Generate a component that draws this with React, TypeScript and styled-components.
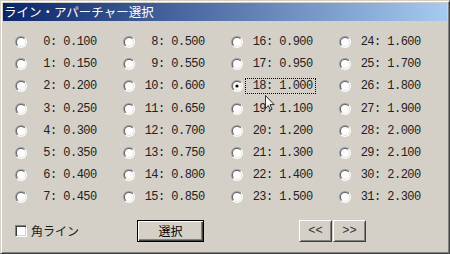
import * as React from 'react'
import styled, { createGlobalStyle } from 'styled-components'

const GlobalStyle = createGlobalStyle`
  html, body {
    margin: 0;
    padding: 0;
    background: #d4d0c8;
  }
  body {
    width: 450px;
    height: 254px;
    overflow: hidden;
  }
`

const Window = styled.div`
  position: relative;
  box-sizing: border-box;
  width: 450px;
  height: 254px;
  padding: 2px;
  background: #d4d0c8;
  border: 1px solid;
  border-color: #d4d0c8 #404040 #404040 #d4d0c8;
  box-shadow: inset 1px 1px #ffffff, inset -1px -1px #808080;
  display: flex;
  flex-direction: column;
  font-family: "Noto Sans CJK JP", sans-serif;
  color: #1c1c1c;
`

const TitleBar = styled.div`
  height: 18px;
  display: flex;
  align-items: center;
  padding-left: 1px;
  background: linear-gradient(to right, #0a246a, #a6caf0);
  color: #fff;
  font-size: 12.5px;
  line-height: 18px;
  white-space: nowrap;
`

const OptionGrid = styled.div`
  margin-top: 10px;
  padding-left: 12px;
  display: grid;
  grid-template-columns: repeat(4, 108px);
  grid-template-rows: repeat(8, 22.2px);
  grid-auto-flow: column;
`

const Option = styled.div`
  display: flex;
  align-items: center;
`

const OptionLabel = styled.span<{ $focused?: boolean }>`
  margin-left: 2px;
  padding: 1px 2px 0 0;
  border: 1px dotted ${p => (p.$focused ? '#000' : 'transparent')};
  font-family: "Liberation Mono", "DejaVu Sans Mono", monospace;
  font-size: 12px;
  letter-spacing: -0.53px;
  line-height: 13px;
  color: #222;
  white-space: pre;
`

const BottomRow = styled.div`
  margin-top: 11px;
  height: 22px;
  padding-left: 12px;
  display: flex;
  align-items: center;
`

const CheckGroup = styled.label`
  width: 122px;
  display: flex;
  align-items: center;
  gap: 4px;
  font-size: 12px;
`

const CheckBox = styled.span`
  box-sizing: border-box;
  width: 12px;
  height: 12px;
  background: #fff;
  border: 1px solid;
  border-color: #808080 #fff #fff #808080;
  box-shadow: inset 1px 1px #404040, inset -1px -1px #d4d0c8;
`

const Button = styled.button<{ $default?: boolean; $width: number }>`
  box-sizing: border-box;
  width: ${p => p.$width}px;
  height: 22px;
  padding: 0;
  margin: 0;
  background: #d4d0c8;
  color: ${p => (p.$default ? '#000' : '#333')};
  font-size: 12px;
  font-family: ${p => (p.$default ? '"Noto Sans CJK JP", sans-serif' : '"Liberation Mono", monospace')};
  border: 1px solid;
  border-color: ${p => (p.$default ? '#000' : '#fff #404040 #404040 #fff')};
  box-shadow: ${p =>
    p.$default
      ? 'inset 1px 1px #fff, inset -1px -1px #404040, inset -2px -2px #808080'
      : 'inset 1px 1px #d4d0c8, inset -1px -1px #808080'};
  display: flex;
  align-items: center;
  justify-content: center;
`

const NavGroup = styled.div`
  margin-left: 95px;
  display: flex;
  gap: 1px;
`

const Cursor = styled.svg`
  position: absolute;
  left: 264px;
  top: 94px;
`

const values = [
  '0.100', '0.150', '0.200', '0.250', '0.300', '0.350', '0.400', '0.450',
  '0.500', '0.550', '0.600', '0.650', '0.700', '0.750', '0.800', '0.850',
  '0.900', '0.950', '1.000', '1.100', '1.200', '1.300', '1.400', '1.500',
  '1.600', '1.700', '1.800', '1.900', '2.000', '2.100', '2.200', '2.300',
]

const Radio = ({ checked }: { checked?: boolean }) => (
  <svg width="12" height="12" viewBox="0 0 12 12" style={{ flex: 'none' }}>
    <defs>
      <linearGradient id="rOuter" x1="0" y1="0" x2="1" y2="1">
        <stop offset="0.5" stopColor="#9a9a9a" />
        <stop offset="0.5" stopColor="#ffffff" />
      </linearGradient>
      <linearGradient id="rInner" x1="0" y1="0" x2="1" y2="1">
        <stop offset="0.5" stopColor="#6a6a6a" />
        <stop offset="0.5" stopColor="#e4e2dc" />
      </linearGradient>
    </defs>
    <circle cx="6" cy="6" r="6" fill="url(#rOuter)" />
    <circle cx="6" cy="6" r="5" fill="url(#rInner)" />
    <circle cx="6" cy="6" r="4" fill="#fff" />
    {checked && <circle cx="6" cy="6" r="1.6" fill="#000" />}
  </svg>
)

export default function App() {
  const selected = 18
  return (
    <>
      <GlobalStyle />
      <Window>
        <TitleBar>ライン・アパーチャー選択</TitleBar>
        <OptionGrid>
          {values.map((v, i) => (
            <Option key={i}>
              <Radio checked={i === selected} />
              <OptionLabel $focused={i === selected}>
                {`${String(i).padStart(3, ' ')}: ${v}`}
              </OptionLabel>
            </Option>
          ))}
        </OptionGrid>
        <BottomRow>
          <CheckGroup>
            <CheckBox />
            角ライン
          </CheckGroup>
          <Button $default $width={67}>選択</Button>
          <NavGroup>
            <Button $width={33}>&lt;&lt;</Button>
            <Button $width={33}>&gt;&gt;</Button>
          </NavGroup>
        </BottomRow>
        <Cursor width="10" height="16" viewBox="0 0 12 19">
          <path
            d="M0.5 0.5 L0.5 16 L4 12.5 L6.5 18 L8.5 17 L6 11.5 L11 11.5 Z"
            fill="#fff"
            stroke="#000"
            strokeWidth="1"
          />
        </Cursor>
      </Window>
    </>
  )
}
